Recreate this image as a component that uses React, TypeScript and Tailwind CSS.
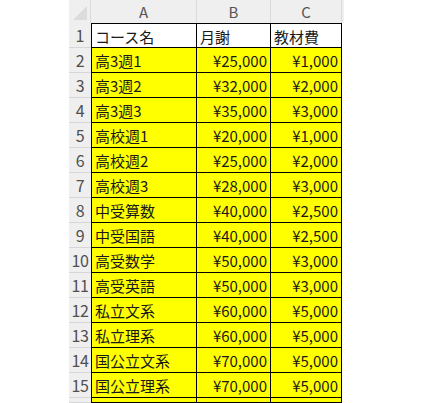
const rows: [string, string, string][] = [
  ["高3週1", "¥25,000", "¥1,000"],
  ["高3週2", "¥32,000", "¥2,000"],
  ["高3週3", "¥35,000", "¥3,000"],
  ["高校週1", "¥20,000", "¥1,000"],
  ["高校週2", "¥25,000", "¥2,000"],
  ["高校週3", "¥28,000", "¥3,000"],
  ["中受算数", "¥40,000", "¥2,500"],
  ["中受国語", "¥40,000", "¥2,500"],
  ["高受数学", "¥50,000", "¥3,000"],
  ["高受英語", "¥50,000", "¥3,000"],
  ["私立文系", "¥60,000", "¥5,000"],
  ["私立理系", "¥60,000", "¥5,000"],
  ["国公立文系", "¥70,000", "¥5,000"],
  ["国公立理系", "¥70,000", "¥5,000"],
  ["", "", ""],
];

const font = "font-['Noto_Sans_CJK_JP',sans-serif]";

export default function App() {
  return (
    <div className={`flex w-[446px] h-[403px] overflow-hidden bg-white ${font}`}>
      <div className="w-[69px] shrink-0" />
      <div className="flex flex-col">
        {/* column headers */}
        <div className="flex h-[23px] bg-[#efefef] text-[15px] text-[#555] leading-[23px]">
          <div className="relative w-[22px] border-r border-[#dadada]">
            <div className="absolute right-[3px] bottom-[3px] w-0 h-0 border-l-[14px] border-l-transparent border-b-[14px] border-b-[#dcdcdc]" />
          </div>
          <div className="w-[106px] text-center border-r border-[#dadada]">A</div>
          <div className="w-[74px] text-center border-r border-[#dadada]">B</div>
          <div className="w-[71px] text-center border-r border-[#dadada]">C</div>
          <div className="w-[2px]" />
        </div>
        {/* header row */}
        <div className="flex h-[25px] text-[15px] leading-[25px] text-[#1a1a1a]">
          <div className="w-[22px] bg-[#efefef] text-[#505050] text-[16px] text-center border-b border-[#d6d6d6]">1</div>
          <div className="w-[106px] px-[3px] border-l border-t border-r border-b border-black bg-white">コース名</div>
          <div className="w-[74px] px-[3px] border-t border-r border-b border-black bg-white">月謝</div>
          <div className="w-[71px] px-[3px] border-t border-r border-b border-black bg-white">教材費</div>
        </div>
        {rows.map((r, i) => (
          <div key={i} className="flex h-[25px] text-[15px] leading-[25px] text-[#1a1a1a]">
            <div className="w-[22px] bg-[#efefef] text-[#505050] text-[16px] text-center border-b border-[#d6d6d6] whitespace-nowrap tracking-[-0.5px]">
              {i < rows.length - 1 ? i + 2 : ""}
            </div>
            <div className="w-[106px] px-[3px] border-l border-r border-b border-black bg-[#ffff00] whitespace-nowrap">{r[0]}</div>
            <div className="w-[74px] px-[3px] border-r border-b border-black bg-[#ffff00] text-right">{r[1]}</div>
            <div className="w-[71px] px-[3px] border-r border-b border-black bg-[#ffff00] text-right">{r[2]}</div>
          </div>
        ))}
      </div>
    </div>
  );
}
